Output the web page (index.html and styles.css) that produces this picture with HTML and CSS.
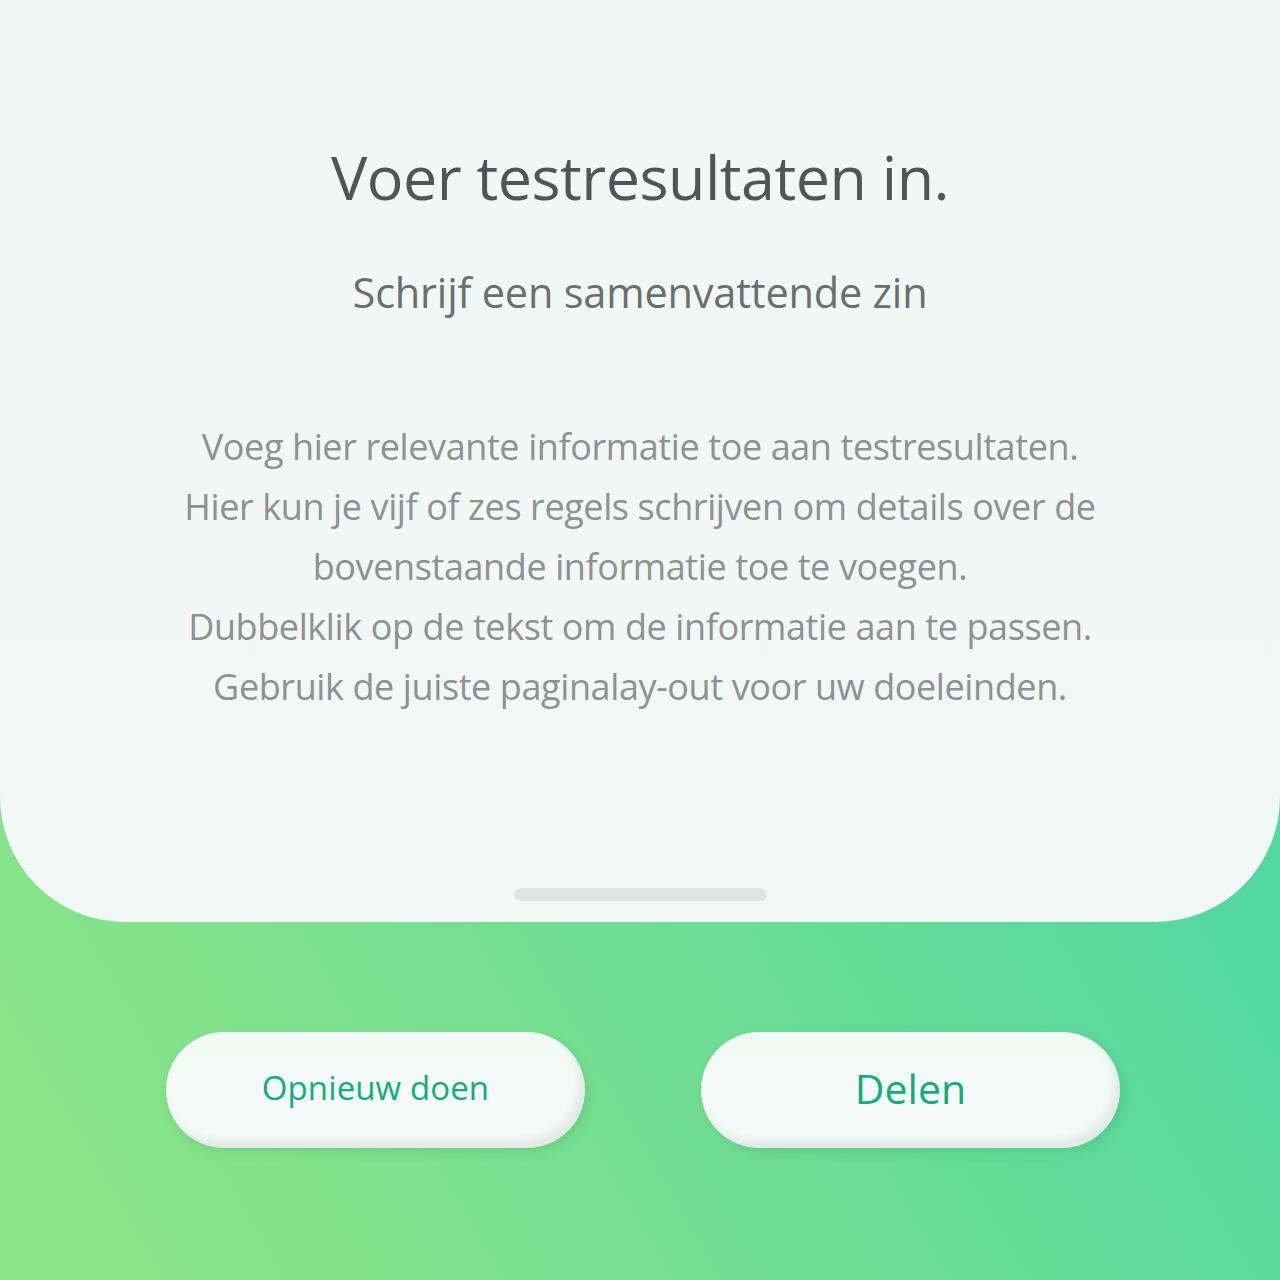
FILE: index.html
```html
<!DOCTYPE html>
<html lang="nl">
<head>
<meta charset="utf-8">
<title>Voer testresultaten in.</title>
<link rel="stylesheet" href="styles.css">
</head>
<body>
<div class="screen">
  <section class="card">
    <h1 class="title">Voer testresultaten in.</h1>
    <p class="subtitle">Schrijf een samenvattende zin</p>
    <p class="body">Voeg hier relevante informatie toe aan testresultaten.<br>Hier kun je vijf of zes regels schrijven om details over de<br>bovenstaande informatie toe te voegen.<br>Dubbelklik op de tekst om de informatie aan te passen.<br>Gebruik de juiste paginalay-out voor uw doeleinden.</p>
    <div class="handle"></div>
  </section>
  <div class="actions">
    <button class="btn btn-small">Opnieuw doen</button>
    <button class="btn btn-large">Delen</button>
  </div>
</div>
</body>
</html>
```
FILE: styles.css
```css
html, body {
  margin: 0;
  padding: 0;
}
body {
  font-family: "Open Sans", "Noto Sans", sans-serif;
}
.screen {
  width: 1280px;
  height: 1280px;
  background: linear-gradient(60deg, #90e686 0%, #72de92 38%, #55d89f 70%, #48d6a8 100%);
  display: flex;
  flex-direction: column;
  overflow: hidden;
}
.card {
  height: 922px;
  box-sizing: border-box;
  background: linear-gradient(180deg, #f0f7f5 0%, #f2f8f6 100%);
  border-radius: 0 0 125px 125px;
  display: flex;
  flex-direction: column;
  align-items: center;
  padding-top: 137px;
}
.title {
  margin: 0;
  font-weight: 400;
  font-size: 61px;
  line-height: 80px;
  color: #505655;
  letter-spacing: -0.5px;
}
.subtitle {
  margin: 49px 0 0;
  font-size: 41.5px;
  line-height: 52px;
  color: #6a6f6e;
  letter-spacing: -0.2px;
}
.body {
  margin: 99px 0 0;
  font-size: 36px;
  line-height: 60px;
  color: #8d9291;
  text-align: center;
  letter-spacing: -0.4px;
}
.handle {
  margin-top: auto;
  margin-bottom: 21px;
  width: 253px;
  height: 13px;
  border-radius: 7px;
  background: #e0e5e3;
}
.actions {
  display: flex;
  justify-content: center;
  gap: 116px;
  padding-top: 110px;
  padding-left: 6px;
}
.btn {
  width: 419px;
  height: 116px;
  border: none;
  border-radius: 58px;
  background: linear-gradient(180deg, #f2faf6 0%, #f4faf8 100%);
  color: #11ae78;
  font-family: "Open Sans", "Noto Sans", sans-serif;
  box-shadow: inset -6px -8px 8px rgba(0, 0, 0, 0.07), 3px 4px 12px rgba(0, 80, 40, 0.12);
  padding: 0 0 5px;
}
.btn-small {
  font-size: 33px;
  letter-spacing: 0.1px;
}
.btn-large {
  font-size: 41px;
}
```
